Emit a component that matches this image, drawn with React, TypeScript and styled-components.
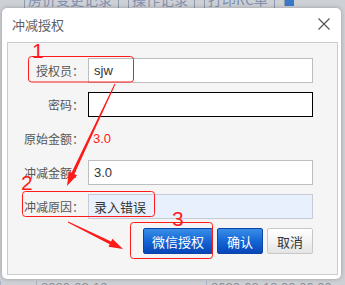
import React from "react";
import styled, { createGlobalStyle } from "styled-components";

const GlobalStyle = createGlobalStyle`
  html, body { margin: 0; padding: 0; background: #cfd2d6; }
  body { font-family: "Noto Sans CJK SC", "Liberation Sans", sans-serif; }
  * { box-sizing: border-box; }
`;

const Page = styled.div`
  position: relative;
  width: 345px;
  height: 285px;
  overflow: hidden;
  background: #cdd0d4;
  display: flex;
  flex-direction: column;
`;

const BgToolbar = styled.div`
  display: flex;
  align-items: center;
  gap: 9px;
  margin-top: -11px;
  height: 20px;
  padding-left: 24px;
  font-size: 14px;
  color: #7f8fb0;
`;

const BgTool = styled.span`
  border-left: 1px solid #8d99ad;
  border-right: 1px solid #8d99ad;
  padding: 0 6px 0 3px;
  line-height: 20px;
  white-space: nowrap;
`;

const BgIcon = styled.span`
  width: 10px;
  height: 14px;
  background: #3b78c8;
  border-left: 1px solid #8d99ad;
`;

const BgFill = styled.div`
  flex: 1;
`;

const BgRow = styled.div`
  display: flex;
  height: 12px;
  margin-bottom: -8px;
  font-family: "Liberation Sans", sans-serif;
  font-size: 13px;
  color: #8c9099;
  line-height: 14px;
`;

const BgCell = styled.span<{ $w: number }>`
  width: ${(p) => p.$w}px;
  padding-left: 4px;
  border-left: 1px solid #aab3c2;
  white-space: nowrap;
`;

const Dialog = styled.div`
  position: absolute;
  left: 2px;
  top: 8px;
  width: 339px;
  height: 271px;
  background: #fff;
  border-radius: 5px;
  box-shadow: 0 0 4px rgba(0, 0, 0, 0.25);
  display: flex;
  flex-direction: column;
`;

const TitleBar = styled.div`
  height: 34px;
  display: flex;
  align-items: center;
  justify-content: space-between;
  padding: 0 11px 2px 10px;
`;

const Title = styled.span`
  font-size: 13px;
  color: #5c5f66;
`;

const CloseBtn = styled.span`
  width: 12px;
  height: 12px;
  display: flex;
`;

const Panel = styled.div`
  flex: 1;
  margin: 0 3px 4px 5px;
  border: 1px solid #cccccc;
  background: #f5f5f5;
  padding: 15px 0 0 0;
  display: grid;
  grid-template-columns: 76px 225px;
  column-gap: 4px;
  row-gap: 9px;
  align-content: start;
`;

const Label = styled.label`
  height: 25px;
  display: flex;
  align-items: center;
  justify-content: flex-end;
  font-size: 12px;
  color: #555;
  white-space: nowrap;
`;

const Input = styled.div<{ $focus?: boolean; $filled?: boolean }>`
  height: 25px;
  display: flex;
  align-items: center;
  padding-left: 5px;
  font-size: 13px;
  color: #333;
  font-family: "Liberation Sans", "Noto Sans CJK SC", sans-serif;
  background: ${(p) => (p.$filled ? "#e8f0fe" : "#fff")};
  border: ${(p) => (p.$focus ? "1.5px solid #000" : p.$filled ? "1px solid #c6ccd6" : "1px solid #bdbdbd")};
`;

const Value = styled.div`
  height: 25px;
  display: flex;
  align-items: center;
  padding-left: 5px;
  font-family: "Liberation Sans", sans-serif;
  font-size: 13px;
  color: #ff1a1a;
`;

const Buttons = styled.div`
  grid-column: 2;
  display: flex;
  justify-content: flex-end;
  gap: 4px;
`;

const Button = styled.button<{ $primary?: boolean; $w: number }>`
  width: ${(p) => p.$w}px;
  height: 26px;
  padding: 0;
  border-radius: 2px;
  font-family: "Noto Sans CJK SC", sans-serif;
  font-size: 13px;
  cursor: pointer;
  color: ${(p) => (p.$primary ? "#fff" : "#333")};
  border: 1px solid ${(p) => (p.$primary ? "#0a46a8" : "#c8c8c8")};
  background: ${(p) =>
    p.$primary
      ? "linear-gradient(to bottom, #3a8ee6 0%, #1467d6 50%, #0845b8 100%)"
      : "linear-gradient(to bottom, #ffffff 0%, #f3f3f3 50%, #e4e4e4 100%)"};
`;

const Overlay = styled.svg`
  position: absolute;
  left: 0;
  top: 0;
  width: 345px;
  height: 285px;
  pointer-events: none;
`;

function arrowPoints(sx: number, sy: number, tx: number, ty: number): string {
  const dx = tx - sx;
  const dy = ty - sy;
  const len = Math.hypot(dx, dy);
  const ux = dx / len;
  const uy = dy / len;
  const nx = -uy;
  const ny = ux;
  const head = 14;
  const bx = tx - head * ux;
  const by = ty - head * uy;
  const pts: [number, number][] = [
    [sx + 0.5 * nx, sy + 0.5 * ny],
    [bx + 1.6 * nx, by + 1.6 * ny],
    [bx + 4.5 * nx, by + 4.5 * ny],
    [tx, ty],
    [bx - 4.5 * nx, by - 4.5 * ny],
    [bx - 1.6 * nx, by - 1.6 * ny],
    [sx - 0.5 * nx, sy - 0.5 * ny],
  ];
  return pts.map((p) => `${p[0].toFixed(2)},${p[1].toFixed(2)}`).join(" ");
}

export default function App() {
  return (
    <>
      <GlobalStyle />
      <Page>
        <BgToolbar>
          <BgTool>房价变更记录</BgTool>
          <BgTool>操作记录</BgTool>
          <BgTool>打印RC单</BgTool>
          <BgIcon />
        </BgToolbar>
        <BgFill />
        <BgRow>
          <BgCell $w={36}></BgCell>
          <BgCell $w={170}>2020-02-12</BgCell>
          <BgCell $w={139}>2020-02-13 00:00:00</BgCell>
        </BgRow>

        <Dialog>
          <TitleBar>
            <Title>冲减授权</Title>
            <CloseBtn>
              <svg width="12" height="12" viewBox="0 0 12 12">
                <path d="M0.5 0.5 L11.5 11.5 M11.5 0.5 L0.5 11.5" stroke="#555" strokeWidth="1.2" />
              </svg>
            </CloseBtn>
          </TitleBar>
          <Panel>
            <Label>授权员：</Label>
            <Input>sjw</Input>
            <Label>密码：</Label>
            <Input $focus />
            <Label>原始金额：</Label>
            <Value>3.0</Value>
            <Label>冲减金额：</Label>
            <Input>3.0</Input>
            <Label>冲减原因：</Label>
            <Input $filled>录入错误</Input>
            <Buttons>
              <Button $primary $w={70}>微信授权</Button>
              <Button $primary $w={46}>确认</Button>
              <Button $w={46}>取消</Button>
            </Buttons>
          </Panel>
        </Dialog>

        <Overlay viewBox="0 0 345 285">
          <g fill="none" stroke="#ff1a1a" strokeWidth="1">
            <rect x="28.5" y="56.5" width="105" height="25.5" rx="3" />
            <rect x="22.5" y="191.5" width="132" height="25" rx="3" />
            <rect x="130.5" y="222.5" width="82" height="36" rx="3" />
          </g>
          <g fill="#ff1a1a">
            <polygon points={arrowPoints(115, 84, 67, 186)} />
            <polygon points={arrowPoints(68, 222, 123, 249)} />
          </g>
          <g fill="#ff1a1a" fontFamily="Liberation Sans, sans-serif" fontSize="21">
            <text x="32" y="58">1</text>
            <text x="21" y="190">2</text>
            <text x="172" y="226">3</text>
          </g>
        </Overlay>
      </Page>
    </>
  );
}
